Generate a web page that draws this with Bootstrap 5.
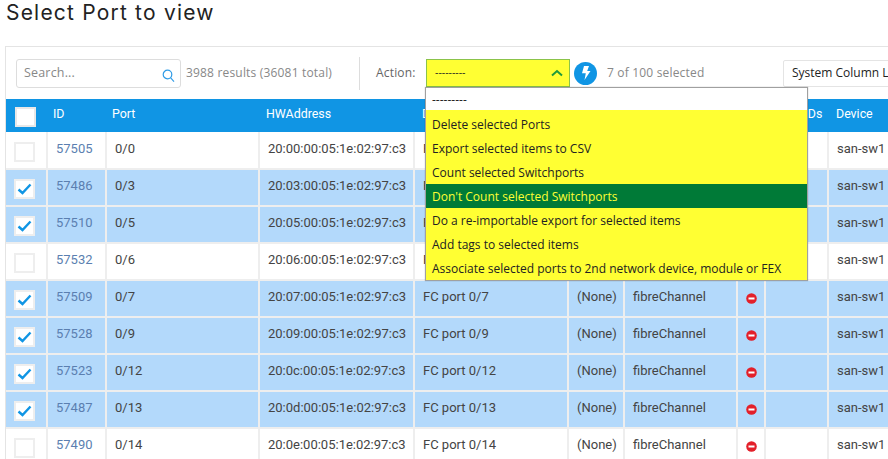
<!DOCTYPE html>
<html lang="en">
<head>
    <meta charset="UTF-8">
    <title>Select Port to view</title>
    <meta name="viewport" content="width=device-width, initial-scale=1">
    <link href="https://cdn.jsdelivr.net/npm/bootstrap@5.3.0/dist/css/bootstrap.min.css" rel="stylesheet">
    <style>
        html, body { height: 459px; overflow: hidden; }
        body { background: #fff; font-family: Roboto, sans-serif; font-size: 13px; color: #444; }
        .page-title { font-family: Inter, sans-serif; font-size: 21px; font-weight: 400; letter-spacing: 1.2px; color: #222; margin: 0; padding: 1px 0 0 6px; height: 46px; line-height: 24px; }
        .port-panel { margin-left: 5px; width: 960px; border: 1px solid #e4e4e4; border-bottom: 0; border-right: 0; }
        .tool-row { height: 52px; padding-left: 10px; font-family: "Open Sans", sans-serif; font-size: 12px; letter-spacing: .18px; color: #888; position: relative; }
        .search-box { width: 165px; height: 29px; border: 1px solid #ddd; border-radius: 3px; padding-left: 7px; color: #888; font-size: 12.5px; }
        .search-box svg { margin-left: auto; margin-right: 5px; margin-top: 5px; }
        .result-count { margin-left: 5px; width: 173px; }
        .tool-sep { width: 1px; height: 33px; background: #ddd; }
        .action-label { margin-left: 16px; width: 50px; color: #666; }
        .action-select { width: 144px; height: 28px; background: #ffff33; border: 1px solid #8bc34a; padding: 0 6px 0 8px; color: #222; font-size: 10.5px; letter-spacing: 0; }
        .bolt-btn { width: 23px; height: 23px; border-radius: 50%; background: #1095e4; margin-left: 4px; }
        .sel-count { margin-left: 10px; width: 176px; }
        .column-pick { width: 120px; height: 27px; border: 1px solid #e4e4e4; border-radius: 2px; padding-left: 8px; color: #222; white-space: nowrap; overflow: hidden; letter-spacing: 0; }
        .action-menu { position: absolute; left: 419px; top: 40px; width: 383px; border: 1px solid #a0a0a0; background: #ffff33; color: #222; font-family: "Open Sans", sans-serif; font-size: 12px; letter-spacing: 0; z-index: 5; box-shadow: 0 0 1px rgba(0,0,0,.3); }
        .action-menu .menu-opt { height: 24px; line-height: 26px; padding-left: 6px; white-space: nowrap; }
        .action-menu .menu-blank { background: #fff; height: 22px; line-height: 24px; margin-bottom: 2px; }
        .action-menu .menu-hot { background: #007a37; color: #ffff33; }
        .port-table { table-layout: fixed; width: 960px; margin: 0; border-collapse: collapse; }
        .port-table th { background: #1095e4; color: #fff; font-weight: 400; font-size: 12.4px; height: 33px; padding: 0 0 3px 8px; border: 0; vertical-align: middle; white-space: nowrap; }
        .port-table th:nth-child(2), .port-table th:nth-child(3) { padding-left: 6px; }
        .port-table th:nth-child(4) { padding-left: 7px; }
        .port-table th:nth-child(9) { padding-left: 16px; }
        .port-table td { height: 37px; padding: 0 0 3px 8px; border: 0; border-left: 2px solid #eee; border-bottom: 2px solid #eee; vertical-align: middle; white-space: nowrap; color: #444; background: #fff; }
        .port-table tr.picked td { background: #b3d9fb; }
        .port-table td:first-child { border-left: 0; padding: 0; }
        .port-table th:first-child { padding: 0; }
        .port-table a { color: #5b7fb0; text-decoration: none; }
        .tick-box { display: flex; align-items: center; justify-content: center; width: 21px; height: 20px; margin: 3px 0 0 8px; background: #fff; border: 2px solid #eee; }
        .port-table th .tick-box { margin: 2px 0 0 9px; border-color: #e8e8e8; }
        .stop-cell svg { display: block; margin-top: 3px; }
    </style>
</head>
<body>

<h1 class="page-title">Select Port to view</h1>

<div class="port-panel">
    <div class="tool-row d-flex align-items-center">
        <div class="search-box d-flex align-items-center">
            Search...
            <svg width="13" height="14" viewBox="0 0 13 14" fill="none" stroke="#2f9be6" stroke-width="1.2"><circle cx="5.5" cy="5.5" r="4.3"/><path d="M8.7 8.9 12 12.6"/></svg>
        </div>
        <div class="result-count">3988 results (36081 total)</div>
        <div class="tool-sep"></div>
        <div class="action-label">Action:</div>
        <div class="action-select d-flex align-items-center justify-content-between">
            <span>---------</span>
            <svg width="12" height="8" viewBox="0 0 12 8" fill="none" stroke="#1f9a3c" stroke-width="2"><path d="M1 6.5 6 2l5 4.5"/></svg>
        </div>
        <div class="bolt-btn d-flex align-items-center justify-content-center">
            <svg width="10" height="14" viewBox="0 0 10 14" fill="#fff"><path d="M3 0h5L6.2 5H9.500L3.500 14l1.300-6.800H1z"/></svg>
        </div>
        <div class="sel-count">7 of 100 selected</div>
        <div class="column-pick d-flex align-items-center">System Column List</div>

        <div class="action-menu">
            <div class="menu-opt menu-blank">---------</div>
            <div class="menu-opt">Delete selected Ports</div>
            <div class="menu-opt">Export selected items to CSV</div>
            <div class="menu-opt">Count selected Switchports</div>
            <div class="menu-opt menu-hot">Don't Count selected Switchports</div>
            <div class="menu-opt">Do a re-importable export for selected items</div>
            <div class="menu-opt">Add tags to selected items</div>
            <div class="menu-opt">Associate selected ports to 2nd network device, module or FEX</div>
        </div>
    </div>

    <table class="table port-table">
        <colgroup>
            <col style="width:41px"><col style="width:59px"><col style="width:153px"><col style="width:155px"><col style="width:154px">
            <col style="width:56px"><col style="width:113px"><col style="width:28px"><col style="width:63px"><col style="width:138px">
        </colgroup>
        <thead>
            <tr>
                <th><span class="tick-box"></span></th><th>ID</th><th>Port</th><th>HWAddress</th><th>Description</th>
                <th>Label</th><th>Type</th><th></th><th>Tag IDs</th><th>Device</th>
            </tr>
        </thead>
        <tbody id="portRows"></tbody>
    </table>
</div>

<script>
    const rows = [
        ['57505', '0/0', '00', false], ['57486', '0/3', '03', true], ['57510', '0/5', '05', true],
        ['57532', '0/6', '06', false], ['57509', '0/7', '07', true], ['57528', '0/9', '09', true],
        ['57523', '0/12', '0c', true], ['57487', '0/13', '0d', true], ['57490', '0/14', '0e', false]
    ];
    const tick = '<svg width="15" height="12" viewBox="0 0 15 12" fill="none" stroke="#1095e4" stroke-width="2.400"><path d="M1.500 6.500 5.500 10 13.500 1.500"/></svg>';
    const stop = '<svg width="11" height="11" viewBox="0 0 11 11"><circle cx="5.500" cy="5.500" r="5.300" fill="#e3202a"/><rect x="2.500" y="4.500" width="6" height="2" fill="#fff"/></svg>';
    document.getElementById('portRows').innerHTML = rows.map(r => `
        <tr class="${r[3] ? 'picked' : ''}">
            <td><span class="tick-box">${r[3] ? tick : ''}</span></td>
            <td><a href="#">${r[0]}</a></td>
            <td>${r[1]}</td>
            <td>20:${r[2]}:00:05:1e:02:97:c3</td>
            <td>FC port ${r[1]}</td>
            <td>(None)</td>
            <td>fibreChannel</td>
            <td class="stop-cell">${stop}</td>
            <td></td>
            <td>san-sw1</td>
        </tr>`).join('');
</script>

<script src="https://cdn.jsdelivr.net/npm/bootstrap@5.3.0/dist/js/bootstrap.bundle.min.js"></script>
</body>
</html>
